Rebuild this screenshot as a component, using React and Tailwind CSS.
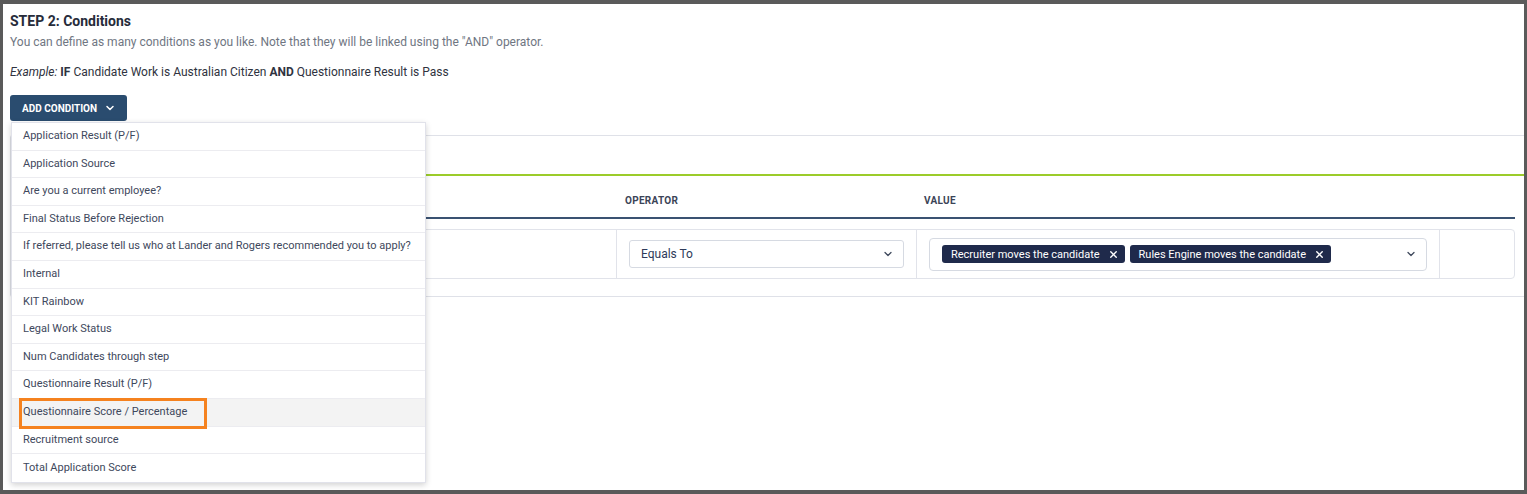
import { ChevronDown, X } from "lucide-react";

const options = [
  "Application Result (P/F)",
  "Application Source",
  "Are you a current employee?",
  "Final Status Before Rejection",
  "If referred, please tell us who at Lander and Rogers recommended you to apply?",
  "Internal",
  "KIT Rainbow",
  "Legal Work Status",
  "Num Candidates through step",
  "Questionnaire Result (P/F)",
  "Questionnaire Score / Percentage",
  "Recruitment source",
  "Total Application Score",
];

const cols = "grid grid-cols-[596px_300px_523px_1fr]";

function Chip({ label }) {
  return (
    <span className="flex items-center h-[18px] pl-[9px] pr-[6px] rounded-[3px] bg-[#1f2a4b] text-white text-[11px] leading-none">
      {label}
      <X size={11} strokeWidth={3} className="ml-[8px]" />
    </span>
  );
}

export default function App() {
  return (
    <div
      className="w-[1527px] h-[494px] bg-[#5a5a5a] pt-[4px] pl-[3px] pr-[3px] pb-[4px]"
      style={{ fontFamily: "Roboto, 'Liberation Sans', sans-serif" }}
    >
      <div className="h-full bg-white pl-[7px] pt-[8px]">
        <h2 className="text-[14px] leading-[18px] font-bold text-[#262b3a]">
          STEP 2: Conditions
        </h2>
        <p className="mt-[4px] text-[12px] leading-[16px] text-[#6f7682]">
          You can define as many conditions as you like. Note that they will be linked using the "AND" operator.
        </p>
        <p className="mt-[14px] text-[12px] leading-[16px] text-[#2f3340]">
          <i>Example:</i> <b>IF</b> Candidate Work is Australian Citizen <b>AND</b> Questionnaire Result is Pass
        </p>

        <div className="relative mt-[15px] w-fit">
          <button className="flex items-center h-[26px] pl-[12px] pr-[11px] rounded-[3px] bg-[#2a4c6f] text-white text-[10px] font-bold">
            ADD CONDITION
            <ChevronDown size={12} strokeWidth={3} className="ml-[7px]" />
          </button>

          <div className="absolute z-10 left-[1px] top-full mt-[1px] w-[415px] bg-white border border-[#e1e2ea] shadow-[0_2px_6px_rgba(0,0,0,0.18)]">
            {options.map((o, i) => (
              <div
                key={o}
                className={`relative flex items-center h-[27.6px] pl-[11px] text-[11px] text-[#3e485c] ${
                  i < options.length - 1 ? "border-b border-[#ececf0]" : ""
                } ${i === 10 ? "bg-[#f3f3f3]" : ""}`}
              >
                {o}
                {i === 10 && (
                  <span className="absolute left-[7px] top-[-1px] w-[188px] h-[31px] border-[3px] border-[#f5821f]" />
                )}
              </div>
            ))}
          </div>
        </div>

        <div className="mt-[14px] h-[162px] border border-r-0 border-[#dfe1e8] rounded-l-[3px]">
          <div className="h-[38px]" />
          <div className="h-[2px] bg-[#9ccc2a]" />
          <div className="pl-[9px] pr-[9px]">
            <div className={`${cols} h-[43px] pt-[8px] items-center border-b-2 border-[#3a5272] text-[10px] font-bold text-[#3b4457] tracking-[0.3px]`}>
              <div />
              <div className="pl-[9px]">OPERATOR</div>
              <div className="pl-[8px]">VALUE</div>
              <div />
            </div>
            <div className={`${cols} mt-[10px] h-[50px] border border-[#e1e3ea] rounded-[4px]`}>
              <div className="border-r border-[#e1e3ea]" />
              <div className="flex items-center px-[12px] border-r border-[#e1e3ea]">
                <div className="flex items-center justify-between w-full h-[28px] pl-[11px] pr-[9px] border border-[#d6dae2] rounded-[3px] text-[12px] text-[#2e3a59]">
                  Equals To
                  <ChevronDown size={12} strokeWidth={2.5} className="text-[#3e485c]" />
                </div>
              </div>
              <div className="flex items-center px-[12px] border-r border-[#e1e3ea]">
                <div className="flex items-center w-full h-[33px] pl-[12px] pr-[9px] border border-[#d6dae2] rounded-[4px]">
                  <div className="flex items-center gap-[5px]">
                    <Chip label="Recruiter moves the candidate" />
                    <Chip label="Rules Engine moves the candidate" />
                  </div>
                  <ChevronDown size={12} strokeWidth={2.5} className="ml-auto text-[#3e485c]" />
                </div>
              </div>
              <div />
            </div>
          </div>
        </div>
      </div>
    </div>
  );
}
